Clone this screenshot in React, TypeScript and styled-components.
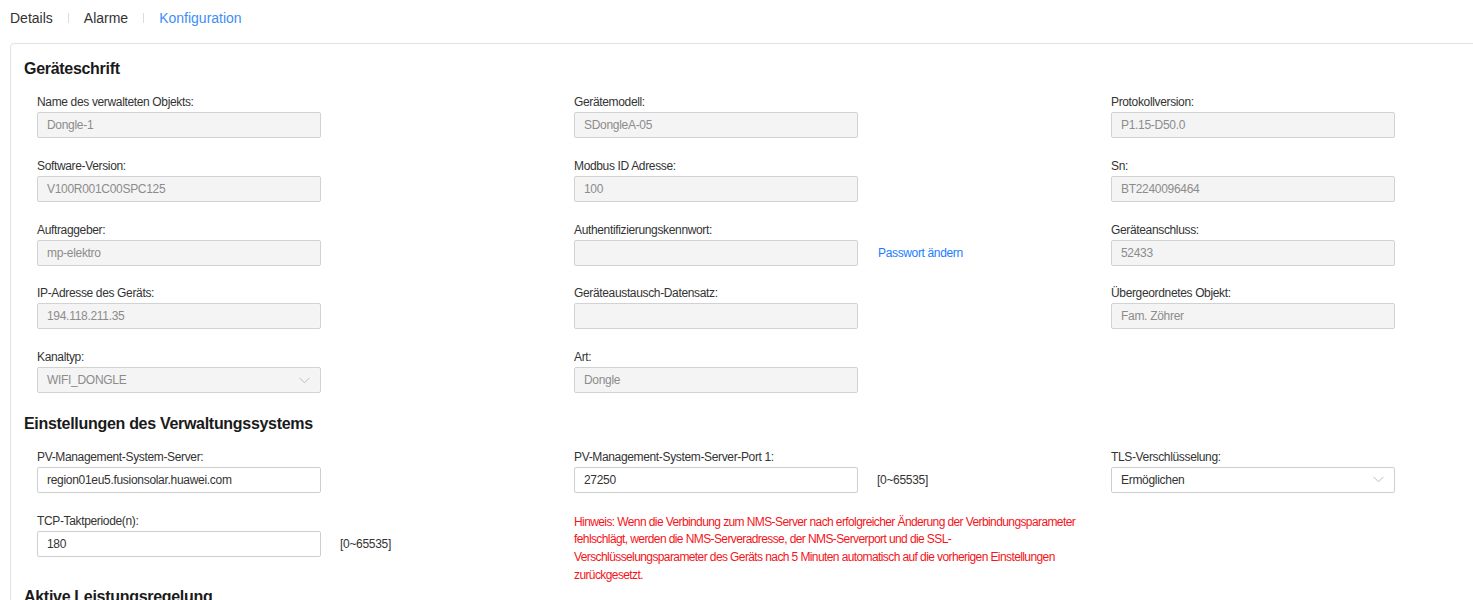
import React from "react";
import styled, { createGlobalStyle } from "styled-components";

const GlobalStyle = createGlobalStyle`
  body {
    margin: 0;
    background: #fff;
    font-family: "Liberation Sans", Arial, sans-serif;
    overflow: hidden;
  }
`;

const Page = styled.div`
  width: 1473px;
  height: 600px;
  overflow: hidden;
`;

const TabBar = styled.div`
  display: flex;
  align-items: center;
  height: 36px;
  padding-left: 10px;
`;

const Tab = styled.span<{ $active?: boolean }>`
  font-size: 14px;
  line-height: 16px;
  color: ${(p) => (p.$active ? "#3d8ef8" : "#333")};
`;

const TabSep = styled.span`
  width: 1px;
  height: 10px;
  background: #dcdcdc;
  margin: 0 15px;
`;

const Card = styled.div`
  margin: 7px -40px 0 10px;
  border: 1px solid #e2e2e2;
  border-radius: 4px;
  padding: 14px 13px 0;
`;

const SectionTitle = styled.h2`
  margin: 1px 0 15px;
  font-size: 16px;
  line-height: 20px;
  font-weight: bold;
  letter-spacing: -0.3px;
  color: #1a1a1a;
`;

const FieldGrid = styled.div`
  display: grid;
  grid-template-columns: 537px 537px 537px;
  align-items: start;
  margin-left: 13px;
`;

const Field = styled.div`
  margin-bottom: 19.75px;
`;

const Label = styled.div`
  font-size: 12px;
  line-height: 16px;
  letter-spacing: -0.35px;
  color: #333;
  margin-bottom: 2px;
`;

const Row = styled.div`
  display: flex;
  align-items: center;
`;

const Input = styled.div<{ $disabled?: boolean }>`
  box-sizing: border-box;
  width: 284px;
  height: 26px;
  display: flex;
  align-items: center;
  justify-content: space-between;
  padding: 0 10px 0 9px;
  border: 1px solid ${(p) => (p.$disabled ? "#d2d2d2" : "#cfcfcf")};
  border-radius: 2px;
  background: ${(p) => (p.$disabled ? "#f4f4f4" : "#fff")};
  color: ${(p) => (p.$disabled ? "#8c8c8c" : "#333")};
  font-size: 12px;
  letter-spacing: -0.3px;
`;

const Suffix = styled.span`
  margin-left: 19px;
  font-size: 12px;
  letter-spacing: -0.3px;
  color: #333;
`;

const Link = styled.span`
  margin-left: 20px;
  font-size: 12px;
  letter-spacing: -0.35px;
  color: #1a7dff;
`;

const Hint = styled.div`
  width: 508px;
  font-size: 12px;
  line-height: 17.7px;
  letter-spacing: -0.6px;
  color: #f4151b;
  margin-top: 1px;
  margin-bottom: 2px;
`;

const Chevron = () => (
  <svg width="11" height="7" viewBox="0 0 11 7">
    <polyline points="0.5,0.8 5.5,5.8 10.5,0.8" fill="none" stroke="#bbb" strokeWidth="1" />
  </svg>
);

type FieldProps = {
  label: string;
  value?: string;
  disabled?: boolean;
  select?: boolean;
  suffix?: React.ReactNode;
};

const FormField = ({ label, value, disabled, select, suffix }: FieldProps) => (
  <Field>
    <Label>{label}</Label>
    <Row>
      <Input $disabled={disabled}>
        <span>{value}</span>
        {select && <Chevron />}
      </Input>
      {suffix}
    </Row>
  </Field>
);

export default function App() {
  return (
    <Page>
      <GlobalStyle />
      <TabBar>
        <Tab>Details</Tab>
        <TabSep />
        <Tab>Alarme</Tab>
        <TabSep />
        <Tab $active>Konfiguration</Tab>
      </TabBar>
      <Card>
        <SectionTitle>Geräteschrift</SectionTitle>
        <FieldGrid>
          <FormField label="Name des verwalteten Objekts:" value="Dongle-1" disabled />
          <FormField label="Gerätemodell:" value="SDongleA-05" disabled />
          <FormField label="Protokollversion:" value="P1.15-D50.0" disabled />
          <FormField label="Software-Version:" value="V100R001C00SPC125" disabled />
          <FormField label="Modbus ID Adresse:" value="100" disabled />
          <FormField label="Sn:" value="BT2240096464" disabled />
          <FormField label="Auftraggeber:" value="mp-elektro" disabled />
          <FormField
            label="Authentifizierungskennwort:"
            value=""
            disabled
            suffix={<Link>Passwort ändern</Link>}
          />
          <FormField label="Geräteanschluss:" value="52433" disabled />
          <FormField label="IP-Adresse des Geräts:" value="194.118.211.35" disabled />
          <FormField label="Geräteaustausch-Datensatz:" value="" disabled />
          <FormField label="Übergeordnetes Objekt:" value="Fam. Zöhrer" disabled />
          <FormField label="Kanaltyp:" value="WIFI_DONGLE" disabled select />
          <FormField label="Art:" value="Dongle" disabled />
        </FieldGrid>

        <SectionTitle>Einstellungen des Verwaltungssystems</SectionTitle>
        <FieldGrid>
          <FormField label="PV-Management-System-Server:" value="region01eu5.fusionsolar.huawei.com" />
          <FormField
            label="PV-Management-System-Server-Port 1:"
            value="27250"
            suffix={<Suffix>[0~65535]</Suffix>}
          />
          <FormField label="TLS-Verschlüsselung:" value="Ermöglichen" select />
          <FormField label="TCP-Taktperiode(n):" value="180" suffix={<Suffix>[0~65535]</Suffix>} />
          <Hint>
            Hinweis: Wenn die Verbindung zum NMS-Server nach erfolgreicher Änderung der
            Verbindungsparameter fehlschlägt, werden die NMS-Serveradresse, der NMS-Serverport
            und die SSL-Verschlüsselungsparameter des Geräts nach 5 Minuten automatisch auf die
            vorherigen Einstellungen zurückgesetzt.
          </Hint>
        </FieldGrid>

        <SectionTitle>Aktive Leistungsregelung</SectionTitle>
      </Card>
    </Page>
  );
}
